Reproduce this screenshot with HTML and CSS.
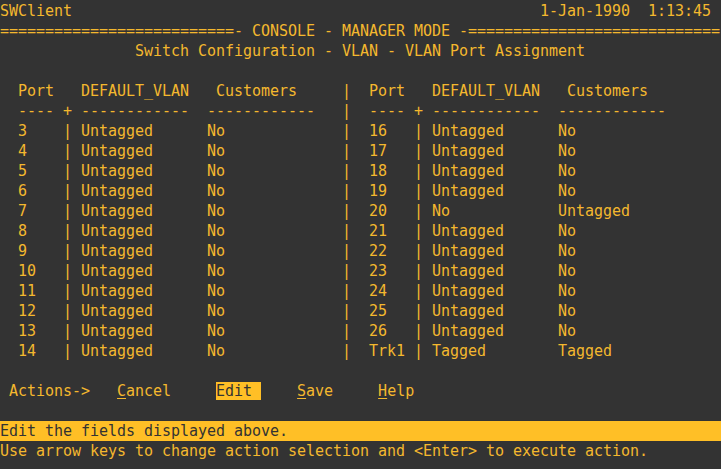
FILE: index.html
```html
<!DOCTYPE html>
<html>
<head>
<meta charset="utf-8">
<link rel="stylesheet" href="styles.css">
</head>
<body>
<div class="term">
<div class="row">SWClient                                                    1-Jan-1990  1:13:45</div>
<div class="row">==========================- CONSOLE - MANAGER MODE -============================</div>
<div class="row">               Switch Configuration - VLAN - VLAN Port Assignment</div>
<div class="row"> </div>
<div class="row">  Port   DEFAULT_VLAN   Customers     |  Port   DEFAULT_VLAN   Customers</div>
<div class="row">  ---- + ------------  ------------   |  ---- + ------------  ------------</div>
<div class="row">  3    | Untagged      No             |  16   | Untagged      No</div>
<div class="row">  4    | Untagged      No             |  17   | Untagged      No</div>
<div class="row">  5    | Untagged      No             |  18   | Untagged      No</div>
<div class="row">  6    | Untagged      No             |  19   | Untagged      No</div>
<div class="row">  7    | Untagged      No             |  20   | No            Untagged</div>
<div class="row">  8    | Untagged      No             |  21   | Untagged      No</div>
<div class="row">  9    | Untagged      No             |  22   | Untagged      No</div>
<div class="row">  10   | Untagged      No             |  23   | Untagged      No</div>
<div class="row">  11   | Untagged      No             |  24   | Untagged      No</div>
<div class="row">  12   | Untagged      No             |  25   | Untagged      No</div>
<div class="row">  13   | Untagged      No             |  26   | Untagged      No</div>
<div class="row">  14   | Untagged      No             |  Trk1 | Tagged        Tagged</div>
<div class="row"> </div>
<div class="row"> Actions->   <span class="ul">C</span>ancel     <span class="sel">Edit </span>    <span class="ul">S</span>ave     <span class="ul">H</span>elp</div>
<div class="row"> </div>
<div class="row status">Edit the fields displayed above.</div>
<div class="row">Use arrow keys to change action selection and &lt;Enter&gt; to execute action.</div>
</div>
</body>
</html>
```
FILE: styles.css
```css
html, body {
  margin: 0;
  padding: 0;
  background: #333333;
}
body {
  width: 721px;
  height: 469px;
  overflow: hidden;
}
.term {
  display: flex;
  flex-direction: column;
  padding-top: 1px;
  font-family: "DejaVu Sans Mono", "Liberation Mono", monospace;
  font-size: 15px;
  letter-spacing: -0.03px;
  color: #f4b82e;
}
.row {
  height: 20px;
  line-height: 21px;
  white-space: pre;
}
.ul {
  text-decoration: underline;
  text-underline-offset: 2px;
}
.sel {
  background: #ffbf26;
  color: #333333;
}
.status {
  background: #ffbf26;
  color: #333333;
}
```
